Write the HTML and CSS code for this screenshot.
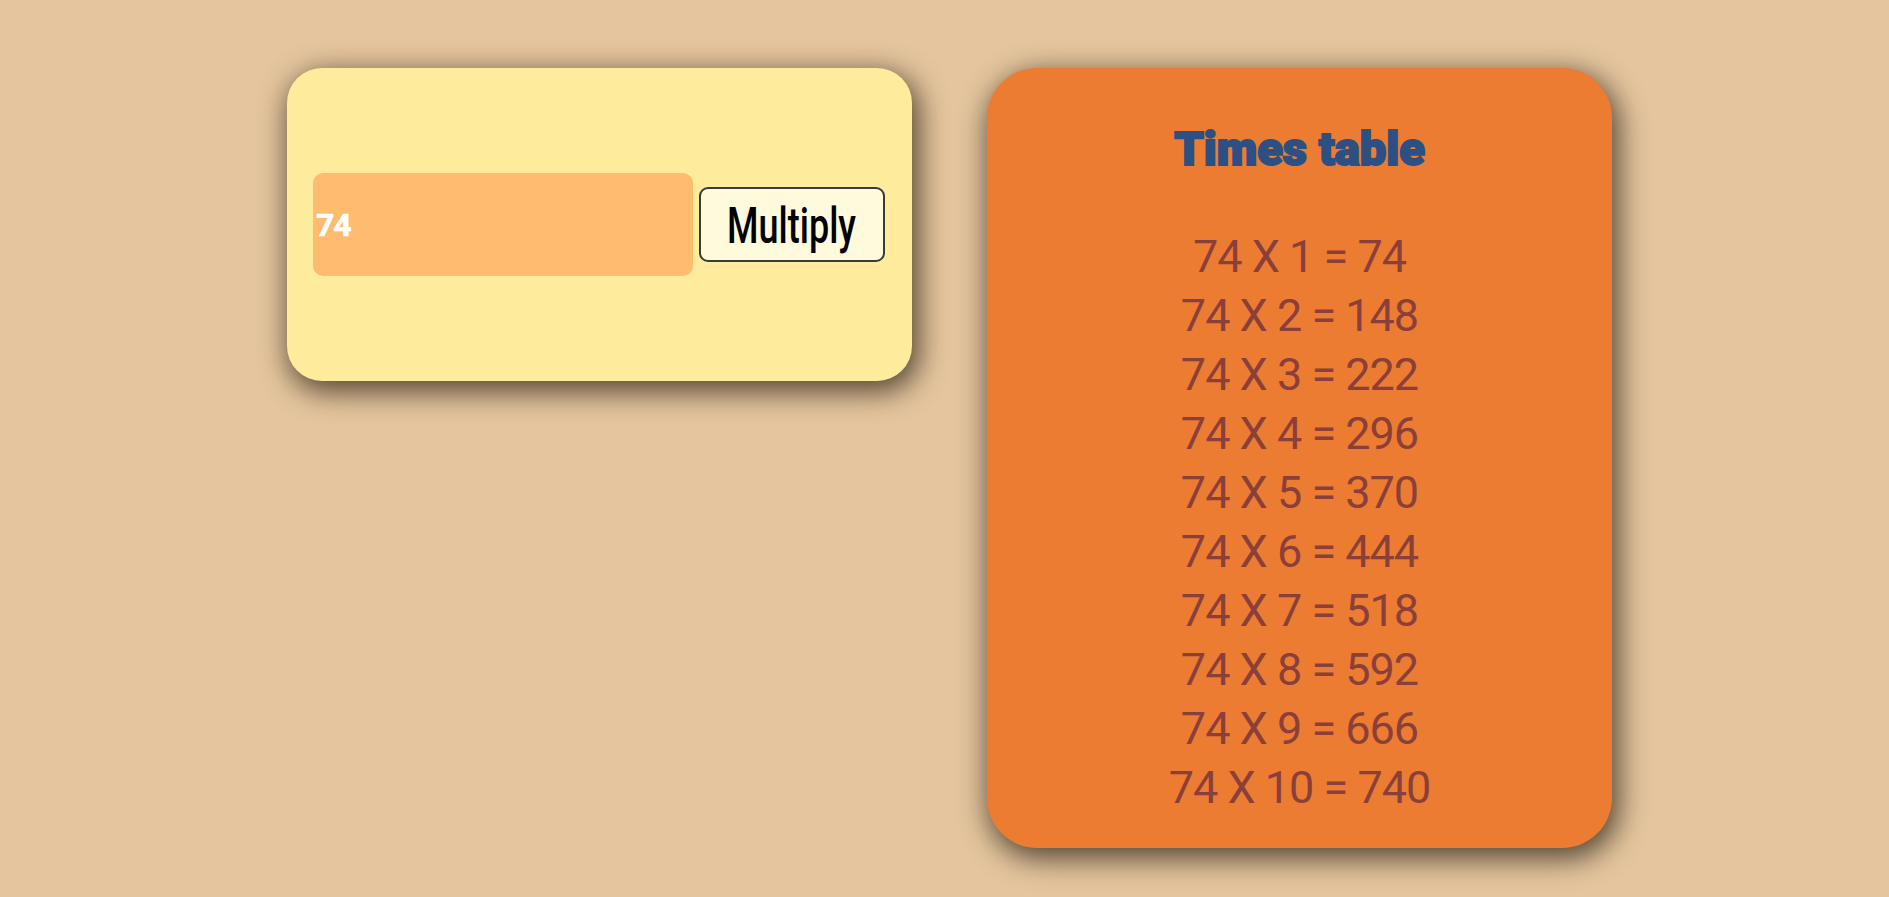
FILE: index.html
```html
<!DOCTYPE html>
<html lang="en">
<head>
<meta charset="utf-8">
<title>Times table</title>
<link rel="stylesheet" href="styles.css">
</head>
<body>
<main class="page">
  <section class="card card-input">
    <input class="num-input" type="text" value="74">
    <button class="btn"><span class="btn-label">Multiply</span></button>
  </section>
  <section class="card card-table">
    <h1 class="title">Times table</h1>
    <ul class="rows">
      <li>74 X 1 = 74</li>
      <li>74 X 2 = 148</li>
      <li>74 X 3 = 222</li>
      <li>74 X 4 = 296</li>
      <li>74 X 5 = 370</li>
      <li>74 X 6 = 444</li>
      <li>74 X 7 = 518</li>
      <li>74 X 8 = 592</li>
      <li>74 X 9 = 666</li>
      <li>74 X 10 = 740</li>
    </ul>
  </section>
</main>
</body>
</html>
```
FILE: styles.css
```css
html, body {
  margin: 0;
  padding: 0;
}
body {
  background: #e4c59e;
  font-family: Roboto, "Liberation Sans", sans-serif;
  height: 897px;
  overflow: hidden;
}
.page {
  display: flex;
  justify-content: center;
  align-items: flex-start;
  gap: 75px;
  padding: 68px 0 0 10px;
}
.card {
  width: 625px;
  box-sizing: border-box;
  box-shadow: 4px 8px 28px 3px rgba(35, 25, 12, 0.72);
}
.card-input {
  height: 313px;
  background: #ffeb9c;
  border-radius: 35px;
  display: flex;
  align-items: center;
  gap: 6px;
  padding: 0 27px 0 26px;
}
.num-input {
  width: 380px;
  height: 103px;
  box-sizing: border-box;
  border: none;
  outline: none;
  border-radius: 10px;
  background: #ffbb6e;
  color: #ffffff;
  font-family: Roboto, "Liberation Sans", sans-serif;
  font-weight: 700;
  font-size: 32px;
  letter-spacing: -1px;
  -webkit-text-stroke: 0.6px #ffffff;
  padding: 0 0 0 3px;
  margin: 0;
}
.btn {
  width: 186px;
  height: 75px;
  box-sizing: border-box;
  border: 2px solid #3a3a3a;
  border-radius: 9px;
  background: #fffadc;
  color: #000;
  padding: 0;
  margin: 0;
  display: flex;
  align-items: center;
  justify-content: center;
  font-family: Roboto, "Liberation Sans", sans-serif;
  font-weight: 500;
  font-size: 50px;
  line-height: 1;
  overflow: hidden;
}
.btn-label {
  display: inline-block;
  padding-top: 3px;
  transform: scaleX(0.72);
  white-space: nowrap;
}
.card-table {
  height: 780px;
  background: #eb7c31;
  border-radius: 50px;
  padding-top: 57px;
  text-align: center;
}
.title {
  margin: 0;
  font-family: Roboto, "Liberation Sans", sans-serif;
  font-weight: 900;
  font-size: 47px;
  line-height: 48px;
  letter-spacing: 0px;
  -webkit-text-stroke: 2px #2c5083;
  color: #2c5083;
}
.rows {
  list-style: none;
  margin: 54px 0 0;
  padding: 0;
  font-family: Roboto, "Liberation Sans", sans-serif;
  font-size: 45px;
  line-height: 59px;
  letter-spacing: -1px;
  color: #8b3f3a;
}
```
